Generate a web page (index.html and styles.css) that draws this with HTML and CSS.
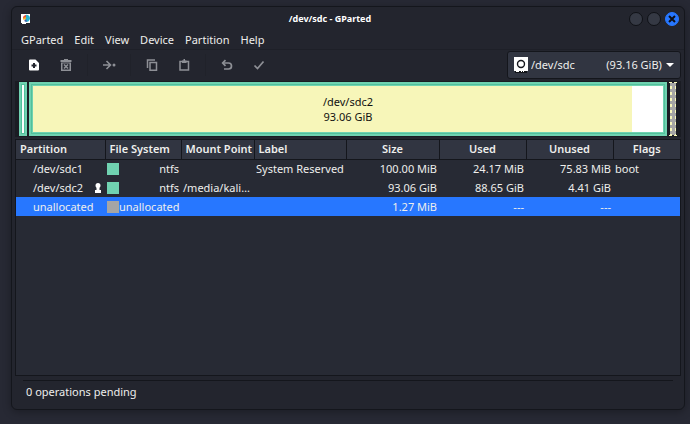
FILE: index.html
```html
<!DOCTYPE html>
<html lang="en">
<head>
    <meta charset="UTF-8">
    <meta name="viewport" content="width=device-width, initial-scale=1.0">
    <title>/dev/sdc - GParted</title>
    <link rel="stylesheet" href="styles.css">
</head>
<body>
    <div class="window">
        <header class="titlebar">
            <svg width="10" height="12" viewBox="0 0 10 12">
                <path fill="#fff" d="M0 1h9v9H5v1H1v-1H0z"/>
                <path fill="#27b5d0" d="M4.500 2A3.500 3.500 0 1 1 4 8.500L5 5z"/>
                <path fill="#e8503a" d="M5 2v3L2 6a3.500 3.500 0 0 1 3-4z"/>
                <path fill="#f0b429" d="M2 5l3-1v2L2.500 7z"/>
                <path fill="#4a5ba8" d="M5 6l1 3-3-1z"/>
            </svg>
            <h1>/dev/sdc - GParted</h1>
            <div class="window-buttons">
                <button type="button" aria-label="Minimize"></button>
                <button type="button" aria-label="Maximize"></button>
                <button type="button" class="close" aria-label="Close">
                    <svg width="8" height="8" viewBox="0 0 8 8"><path d="M1 1l6 6M7 1l-6 6" stroke="#0d1017" stroke-width="2"/></svg>
                </button>
            </div>
        </header>

        <nav class="menubar">
            <button type="button">GParted</button>
            <button type="button">Edit</button>
            <button type="button">View</button>
            <button type="button">Device</button>
            <button type="button">Partition</button>
            <button type="button">Help</button>
        </nav>

        <div class="toolbar">
            <div class="tools">
                <button type="button" class="enabled" aria-label="New">
                    <svg width="12" height="12" viewBox="0 0 12 12"><path fill="currentColor" fill-rule="evenodd" d="M2 .5h5.500L11 4v6.500a1 1 0 0 1-1 1H2a1 1 0 0 1-1-1v-9a1 1 0 0 1 1-1zM5 4v1.500H3.500v2H5V9h2V7.500h1.500v-2H7V4z"/></svg>
                </button>
                <button type="button" aria-label="Delete">
                    <svg width="12" height="12" viewBox="0 0 12 12"><path fill="currentColor" fill-rule="evenodd" d="M4 0h4v1h3.500v2H.5V1H4zM1 3.500h10V12H1zM2.500 4.500v6h7v-6z"/><path d="M4 5.500l4 4M8 5.500l-4 4" stroke="currentColor" stroke-width="1.600"/></svg>
                </button>
            </div>
            <div class="tools">
                <button type="button" aria-label="Resize/Move">
                    <svg width="14" height="12" viewBox="0 0 14 12" fill="none" stroke="currentColor" stroke-width="1.600"><path d="M1 6h7M4.500 2l4 4-4 4"/><circle cx="12" cy="6" r="1.500" fill="currentColor" stroke="none"/></svg>
                </button>
            </div>
            <div class="tools">
                <button type="button" aria-label="Copy">
                    <svg width="12" height="12" viewBox="0 0 12 12" fill="none" stroke="currentColor" stroke-width="1.500"><path d="M4 3.500h6.500v7.700H4zM1.500 9V1H9"/></svg>
                </button>
                <button type="button" aria-label="Paste">
                    <svg width="12" height="12" viewBox="0 0 12 12"><path d="M2 2.500h8.500v8.500H2z" fill="none" stroke="currentColor" stroke-width="1.500"/><path d="M4 1.500h1.500V0H7v1.500h1.500V4H4z" fill="currentColor"/></svg>
                </button>
            </div>
            <div class="tools">
                <button type="button" aria-label="Undo">
                    <svg width="12" height="12" viewBox="0 0 12 12" fill="none" stroke="currentColor" stroke-width="1.700"><path d="M2 4h5.500a2.900 2.900 0 0 1 0 6H3"/><path d="M4.500 1.200L1.700 4l2.800 2.800"/></svg>
                </button>
                <button type="button" aria-label="Apply">
                    <svg width="12" height="12" viewBox="0 0 12 12" fill="none" stroke="currentColor" stroke-width="1.700"><path d="M1.500 6.500l3 3 6-7"/></svg>
                </button>
            </div>
            <div class="device">
                <svg width="14" height="16" viewBox="0 0 14 16">
                    <path fill="#fff" d="M0 0h14v14H0z"/>
                    <path fill="#111318" d="M1 14h12v2H1z"/>
                    <path fill="#fff" d="M2 14h3v1H2zM7 14h1v1H7zM9 14h1v1H9z"/>
                    <circle cx="7" cy="7" r="3.500" fill="none" stroke="#14161c" stroke-width="1.400"/>
                </svg>
                <select aria-label="Device">
                    <option>/dev/sdc&nbsp;&nbsp;&nbsp;&nbsp;&nbsp;&nbsp;&nbsp;&nbsp;&nbsp;&nbsp;&nbsp;(93.16 GiB)</option>
                </select>
                <svg width="8" height="4" viewBox="0 0 8 4"><path fill="#fff" d="M0 0h8L4 4z"/></svg>
            </div>
        </div>

        <div class="disk">
            <div class="part small"></div>
            <div class="part large">
                <div class="used"></div>
                <div class="caption">
                    <span>/dev/sdc2</span>
                    <span>93.06 GiB</span>
                </div>
            </div>
            <div class="free"></div>
        </div>

        <main class="list">
            <table>
                <colgroup>
                    <col class="c-partition">
                    <col class="c-fs">
                    <col class="c-mount">
                    <col class="c-label">
                    <col class="c-size">
                    <col class="c-used">
                    <col class="c-unused">
                    <col>
                </colgroup>
                <thead>
                    <tr>
                        <th>Partition</th>
                        <th>File System</th>
                        <th>Mount Point</th>
                        <th>Label</th>
                        <th class="center">Size</th>
                        <th class="center">Used</th>
                        <th class="center">Unused</th>
                        <th class="center">Flags</th>
                    </tr>
                </thead>
                <tbody>
                    <tr>
                        <td><div class="name">/dev/sdc1</div></td>
                        <td><div class="fs"><i class="swatch ntfs"></i>ntfs</div></td>
                        <td></td>
                        <td>System Reserved</td>
                        <td class="num">100.00 MiB</td>
                        <td class="num">24.17 MiB</td>
                        <td class="num">75.83 MiB</td>
                        <td>boot</td>
                    </tr>
                    <tr>
                        <td>
                            <div class="name">/dev/sdc2
                                <svg width="6" height="10" viewBox="0 0 6 10"><path fill="#fff" d="M3 0a2.500 2.500 0 0 1 2.500 2.500C5.500 4 4.500 4.500 4.500 5v2H6v3H0V7h1.500V5C1.500 4.500.5 4 .5 2.500A2.500 2.500 0 0 1 3 0z"/></svg>
                            </div>
                        </td>
                        <td><div class="fs"><i class="swatch ntfs"></i>ntfs</div></td>
                        <td>/media/kali…</td>
                        <td></td>
                        <td class="num">93.06 GiB</td>
                        <td class="num">88.65 GiB</td>
                        <td class="num">4.41 GiB</td>
                        <td></td>
                    </tr>
                    <tr class="selected">
                        <td><div class="name">unallocated</div></td>
                        <td><div class="fs"><i class="swatch"></i>unallocated</div></td>
                        <td></td>
                        <td></td>
                        <td class="num">1.27 MiB</td>
                        <td class="num">---</td>
                        <td class="num">---</td>
                        <td></td>
                    </tr>
                </tbody>
            </table>
        </main>

        <footer class="status">0 operations pending</footer>
    </div>
</body>
</html>
```

FILE: styles.css
```css
* {
    box-sizing: border-box;
}

body {
    display: flex;
    min-height: 100vh;
    margin: 0;
    padding: 6px 5px 14px 11px;
    background-color: #272934;
    color: #eeeeec;
    font-family: "Noto Sans", sans-serif;
    font-size: 11px;
    line-height: 16px;
}

button, select {
    margin: 0;
    padding: 0;
    border: 0;
    background: none;
    color: inherit;
    font: inherit;
}

svg {
    display: block;
    flex: none;
}

.window {
    display: flex;
    flex-direction: column;
    flex: 1;
    min-width: 0;
    border: 1px solid #14161c;
    border-radius: 6px;
    background-color: #23252e;
    box-shadow: 0 2px 8px rgba(0, 0, 0, 0.3);
}

/* title bar */
.titlebar {
    display: flex;
    align-items: center;
    height: 23px;
    padding: 0 5px 0 9px;
}

.titlebar h1 {
    flex: 1;
    margin: 0;
    color: #fff;
    font-size: 9px;
    font-weight: bold;
    text-align: center;
}

.window-buttons {
    display: flex;
    gap: 4px;
}

.window-buttons button {
    display: flex;
    align-items: center;
    justify-content: center;
    width: 14px;
    height: 14px;
    border: 1px solid #0f1116;
    border-radius: 50%;
    background-color: #353944;
}

.window-buttons .close {
    border-color: #2777ff;
    background-color: #2777ff;
}

/* menus and tools */
.menubar {
    display: flex;
    gap: 11px;
    height: 20px;
    padding: 2px 9px;
    border-bottom: 1px solid #1e2028;
}

.toolbar {
    display: flex;
    align-items: center;
    height: 30px;
    padding: 0 3px 0 6px;
}

.tools {
    display: flex;
    height: 22px;
    padding: 0 5px;
    border-right: 1px solid #20222a;
}

.tools:first-child {
    padding-left: 0;
}

.tools:nth-child(4) {
    border: 0;
}

.tools button {
    display: flex;
    align-items: center;
    justify-content: center;
    width: 32px;
    color: #8e9096;
}

.tools .enabled {
    color: #fff;
}

.device {
    display: flex;
    align-items: center;
    height: 28px;
    margin-left: auto;
    padding: 0 6px;
    border: 1px solid #14161c;
    border-radius: 3px;
    background-color: #313541;
}

.device select {
    margin: 0 4px 0 3px;
    appearance: none;
}

/* disk map */
.disk {
    display: flex;
    gap: 2px;
    height: 56px;
    margin: 1px 3px 2px;
    padding: 1px 4px;
    background-color: #1a1c23;
}

.part {
    display: flex;
    border: 4px solid #70d2b1;
    outline: 1px solid #52c09b;
    outline-offset: -3px;
    background-color: #fff;
}

.small {
    width: 8px;
    border-width: 3px;
}

.large {
    position: relative;
    flex: 1;
}

.used {
    width: 95%;
    background-color: #f7f6b9;
}

/* centred over the whole partition, not only its used part */
.caption {
    position: absolute;
    inset: 0;
    display: flex;
    flex-direction: column;
    align-items: center;
    justify-content: center;
    color: #111;
    line-height: 15px;
}

.free {
    width: 8px;
    padding: 0 1px;
    border: 1px dashed #f7f6b9;
    border-width: 1px 0;
    background: #a5a5a5 repeating-linear-gradient(#a5a5a5 0 3px, #f7f6b9 3px 6px) content-box;
    background-clip: content-box, border-box;
    background-color: #a5a5a5;
}

.free::before {
    content: "";
    display: block;
    width: 3px;
    height: 100%;
    margin-left: 2px;
    background-color: #a5a5a5;
}

/* partition list */
.list {
    flex: 1;
    margin: 0 3px;
    border: 1px solid #14161c;
    background-color: #272a34;
}

table {
    width: 100%;
    table-layout: fixed;
    border-collapse: collapse;
}

.c-partition {
    width: 89px;
}

.c-fs {
    width: 76px;
}

.c-mount {
    width: 73px;
}

.c-label {
    width: 92px;
}

.c-size {
    width: 93px;
}

.c-used, .c-unused {
    width: 87px;
}

th, td {
    height: 19px;
    padding: 0 2px;
    overflow: hidden;
    text-align: left;
    white-space: nowrap;
}

th {
    padding: 0 4px;
    border-right: 1px solid #14161c;
    border-bottom: 1px solid #14161c;
    background-color: #313541;
    font-weight: 600;
}

th:last-child {
    border-right: 0;
}

th.center {
    text-align: center;
}

td.num {
    text-align: right;
}

.name, .fs {
    display: flex;
    align-items: center;
    justify-content: space-between;
}

.name {
    padding: 0 2px 0 15px;
}

.swatch {
    flex: none;
    width: 12px;
    height: 12px;
    background-color: #a5a5a5;
}

.ntfs {
    background-color: #70d2b1;
}

.selected {
    background-color: #2777ff;
}

.status {
    margin: 4px 11px 0;
    padding: 3px 3px 9px;
    border-top: 1px solid #14161c;
}
```
